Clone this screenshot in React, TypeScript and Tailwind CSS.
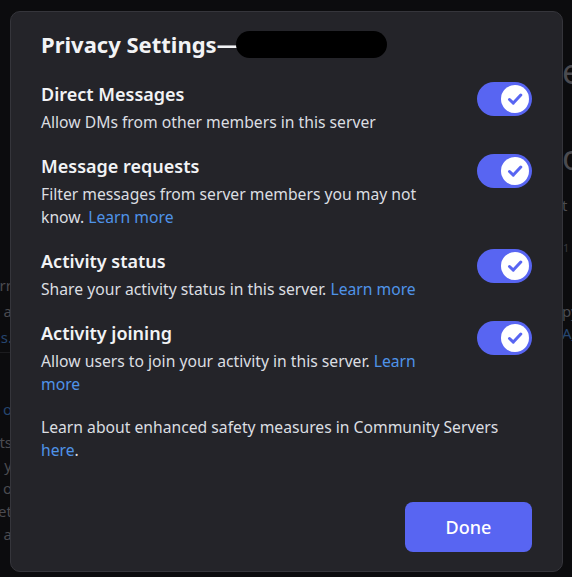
import React from "react";

type Row = {
  title: string;
  text: string;
  link?: boolean;
};

const rows: Row[] = [
  { title: "Direct Messages", text: "Allow DMs from other members in this server" },
  {
    title: "Message requests",
    text: "Filter messages from server members you may not know.",
    link: true,
  },
  { title: "Activity status", text: "Share your activity status in this server.", link: true },
  {
    title: "Activity joining",
    text: "Allow users to join your activity in this server.",
    link: true,
  },
];

function Toggle() {
  return (
    <div className="flex h-[34px] w-[55px] shrink-0 items-center justify-end rounded-full bg-[#5865f2] pr-[3px]">
      <div className="flex h-[28px] w-[28px] items-center justify-center rounded-full bg-white">
        <svg width="28" height="28" viewBox="0 0 28 28" fill="none">
          <path
            d="M8.5 14.5l3.8 3.6L19.8 10"
            stroke="#5865f2"
            strokeWidth="3"
            strokeLinecap="round"
            strokeLinejoin="round"
          />
        </svg>
      </div>
    </div>
  );
}

function Backdrop() {
  return (
    <div className="absolute inset-0 text-[#4b4b50]">
      <span className="absolute left-[562px] top-[54px] text-[34px] leading-none">e</span>
      <span className="absolute left-[562px] top-[140px] text-[34px] leading-none">o</span>
      <span className="absolute left-[562px] top-[194px] text-[15px]">t</span>
      <span className="absolute left-[563px] top-[240px] text-[11px] text-[#3a3a3e]">1</span>
      <span className="absolute left-[562px] top-[300px] text-[15px]">py</span>
      <span className="absolute left-[562px] top-[322px] text-[15px] text-[#26466f]">A_</span>
      <div className="absolute left-0 top-[272px] flex w-[12px] flex-col items-end text-[15px] leading-[26px]">
        <span>rr</span>
        <span>a</span>
        <span className="text-[#26466f]">s.</span>
      </div>
      <div className="absolute left-0 top-[352px] h-px w-[10px] bg-[#1c1c1f]" />
      <div className="absolute left-0 top-[398px] flex w-[12px] flex-col items-end text-[15px] leading-[23px]">
        <span className="text-[#26466f]">o</span>
        <span className="mt-[10px]">ts</span>
        <span>y</span>
        <span>o</span>
        <span>et</span>
        <span>a</span>
      </div>
    </div>
  );
}

export default function App() {
  return (
    <div
      className="relative h-[577px] w-[572px] overflow-hidden bg-[#0c0c0e] pl-[10px] pt-[11px]"
      style={{ fontFamily: '"Noto Sans", "Open Sans", sans-serif' }}
    >
      <Backdrop />
      <div className="relative flex h-[561px] w-[553px] flex-col rounded-[10px] border border-[#35353b] bg-[#242429] px-[30px] pb-[19px] pt-[18px]">
        <div className="flex h-[28px] items-center">
          <h1 className="text-[22px] font-bold leading-[28px] text-[#f2f3f5]">
            Privacy Settings—
          </h1>
          <span className="ml-[-3px] mt-[1px] h-[27px] w-[151px] rounded-full bg-black" />
        </div>

        <div className="mt-[24px] flex flex-col gap-[20px]">
          {rows.map((r) => (
            <div key={r.title} className="flex items-start justify-between">
              <div className="w-[400px]">
                <div className="text-[18px] font-semibold leading-[24px] text-[#f2f3f5]">
                  {r.title}
                </div>
                <p className="mt-[5px] text-[15.7px] leading-[23px] text-[#dbdee1]">
                  {r.text}
                  {r.link && (
                    <>
                      {" "}
                      <span className="text-[#4f93e8]">Learn more</span>
                    </>
                  )}
                </p>
              </div>
              <Toggle />
            </div>
          ))}
          <p className="text-[15.7px] leading-[23px] text-[#dbdee1]">
            Learn about enhanced safety measures in Community Servers{" "}
            <span className="text-[#4f93e8]">here</span>.
          </p>
        </div>

        <div className="mt-auto flex justify-end">
          <button className="h-[50px] w-[127px] rounded-[8px] bg-[#5865f2] text-[18px] font-medium text-white">
            Done
          </button>
        </div>
      </div>
    </div>
  );
}
